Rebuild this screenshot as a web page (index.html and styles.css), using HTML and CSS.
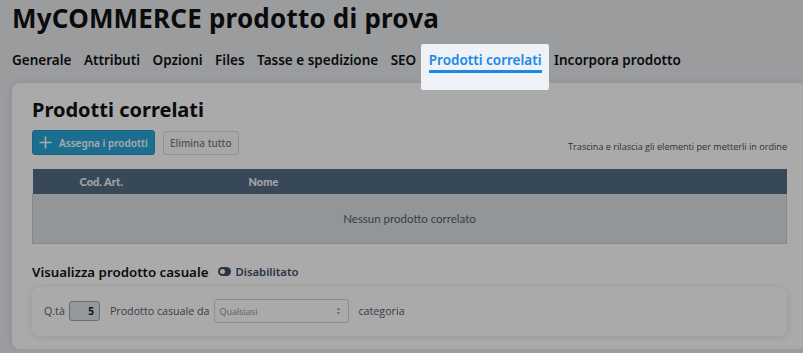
FILE: index.html
```html
<!DOCTYPE html>
<html lang="it">
<head>
    <meta charset="UTF-8">
    <meta name="viewport" content="width=device-width, initial-scale=1.0">
    <title>MyCOMMERCE prodotto di prova</title>
    <link rel="stylesheet" href="styles.css">
</head>
<body>
    <h1 class="page-title">MyCOMMERCE prodotto di prova</h1>

    <nav class="tabs">
        <a href="#">Generale</a>
        <a href="#">Attributi</a>
        <a href="#">Opzioni</a>
        <a href="#">Files</a>
        <a href="#">Tasse e spedizione</a>
        <a href="#">SEO</a>
        <a href="#" class="active"><span>Prodotti correlati</span></a>
        <a href="#">Incorpora prodotto</a>
    </nav>

    <div class="card">
        <h2>Prodotti correlati</h2>

        <div class="toolbar">
            <button type="button" class="btn btn-primary">
                <svg width="13" height="13" viewBox="0 0 13 13"><path d="M6.5 0.5v12M0.5 6.5h12" stroke="currentColor" stroke-width="1.6" fill="none"/></svg>
                Assegna i prodotti
            </button>
            <button type="button" class="btn btn-light">Elimina tutto</button>
            <span class="hint">Trascina e rilascia gli elementi per metterli in ordine</span>
        </div>

        <table class="related">
            <thead>
                <tr>
                    <th class="col-code">Cod. Art.</th>
                    <th>Nome</th>
                </tr>
            </thead>
            <tbody>
                <tr>
                    <td colspan="2" class="empty">Nessun prodotto correlato</td>
                </tr>
            </tbody>
        </table>

        <div class="random-head">
            <h3>Visualizza prodotto casuale</h3>
            <span class="switch"><i></i>Disabilitato</span>
        </div>

        <div class="random-box">
            <label>Q.tà</label>
            <input type="text" class="qty" value="5">
            <label>Prodotto casuale da</label>
            <div class="select">
                Qualsiasi
                <svg width="5" height="8" viewBox="0 0 5 8"><path d="M2.5 0.5L4.5 3H0.5zM2.5 7.5L4.5 5H0.5z" fill="#b0b0b0"/></svg>
            </div>
            <label>categoria</label>
        </div>
    </div>

    <div class="overlay"></div>
</body>
</html>
```

FILE: styles.css
```css
body {
    margin: 0;
    background-color: #e7eaee;
    font-family: "Noto Sans", sans-serif;
    color: #111;
    overflow: hidden;
}

.overlay {
    position: fixed;
    inset: 0;
    background: rgba(0, 0, 0, 0.335);
    z-index: 5;
}

.page-title {
    margin: 0;
    padding: 1px 0 0 12px;
    font-size: 26px;
    line-height: 34px;
    font-weight: 700;
    letter-spacing: 0.2px;
}

.tabs {
    display: flex;
    gap: 12.5px;
    padding: 16px 12px 0;
    height: 48px;
    box-sizing: border-box;
}

.tabs a {
    color: #111;
    text-decoration: none;
    font-size: 13.5px;
    font-weight: 600;
    line-height: 18px;
}

.tabs a.active {
    position: relative;
    z-index: 10;
    background: #eef1f5;
    color: #1a88e8;
    margin: -7px -7px -7px -8px;
    padding: 7px 7px 6px 8px;
    border-radius: 2px;
}

.tabs a.active span {
    display: block;
    border-bottom: 3px solid #1a88e8;
    padding-bottom: 1px;
}

.card {
    background: #fff;
    margin: 0 -4px 0 12px;
    padding: 14px 20px 13px;
    border-radius: 8px;
    box-shadow: 0 0 8px rgba(0, 0, 0, 0.08);
}

.card h2 {
    margin: 0;
    font-size: 20px;
    line-height: 26px;
    font-weight: 700;
}

.toolbar {
    display: flex;
    align-items: center;
    gap: 8px;
    margin-top: 7px;
}

.btn {
    font-family: "Noto Sans", sans-serif;
    font-size: 10px;
    font-weight: 600;
    height: 25px;
    border-radius: 3px;
    padding: 0 6px;
    display: flex;
    align-items: center;
    cursor: pointer;
}

.btn-primary {
    background: #2aa6d8;
    border: 1px solid #2494c2;
    color: #fff;
    gap: 7px;
}

.btn-light {
    background: #fbfbfb;
    border: 1px solid #dadada;
    color: #7a7a7a;
    font-weight: 500;
    height: 24px;
}

.hint {
    margin-left: auto;
    font-family: "Open Sans", sans-serif;
    font-size: 9.1px;
    color: #4a4a4a;
    margin-top: 8px;
}

.related {
    width: 100%;
    border-collapse: collapse;
    margin-top: 14px;
    font-family: Lato, sans-serif;
    font-size: 11px;
}

.related th {
    background: #536c86;
    color: #f4f4f4;
    text-align: left;
    font-weight: 900;
    height: 25px;
    padding: 0;
}

.related th.col-code {
    width: 216px;
    padding-left: 47px;
    box-sizing: border-box;
}

.related td.empty {
    background: #dde1e6;
    border: 1px solid #c8ccd0;
    border-top: none;
    text-align: center;
    height: 49px;
    padding-top: 2px;
    box-sizing: border-box;
    color: #506070;
    font-size: 11.5px;
}

.random-head {
    display: flex;
    align-items: center;
    gap: 10px;
    margin-top: 19px;
}

.random-head h3 {
    margin: 0;
    font-size: 13.3px;
    font-weight: 600;
    line-height: 18px;
}

.switch {
    display: flex;
    align-items: center;
    gap: 4px;
    font-size: 11.3px;
    font-weight: 600;
    color: #3c5069;
}

.switch i {
    width: 13px;
    height: 9px;
    border-radius: 5px;
    background: #3c5069;
    position: relative;
}

.switch i::after {
    content: "";
    position: absolute;
    left: 2px;
    top: 2px;
    width: 5px;
    height: 5px;
    border-radius: 50%;
    background: #fff;
}

.random-box {
    display: flex;
    align-items: center;
    gap: 10px;
    margin-top: 6px;
    padding: 12px 12px;
    height: 49px;
    box-sizing: border-box;
    border-radius: 8px;
    background: #fff;
    box-shadow: 0 1px 7px rgba(0, 0, 0, 0.12);
    font-family: "Open Sans", sans-serif;
    font-size: 11px;
    color: #506070;
}

.random-box label {
    font-size: 10.7px;
}

.qty {
    width: 31px;
    height: 20px;
    box-sizing: border-box;
    margin-left: -6px;
    border: 1px solid #9aa4b0;
    border-radius: 3px;
    background: #dfe4ea;
    text-align: right;
    padding: 0 5px;
    font-family: "Open Sans", sans-serif;
    font-size: 10px;
    font-weight: 700;
    color: #222;
}

.select {
    width: 135px;
    height: 24px;
    box-sizing: border-box;
    margin-left: -6px;
    border: 1px solid #cfd4da;
    border-radius: 3px;
    display: flex;
    align-items: center;
    justify-content: space-between;
    padding: 0 7px 0 5px;
    font-size: 9px;
    color: #8a8f95;
}
```
